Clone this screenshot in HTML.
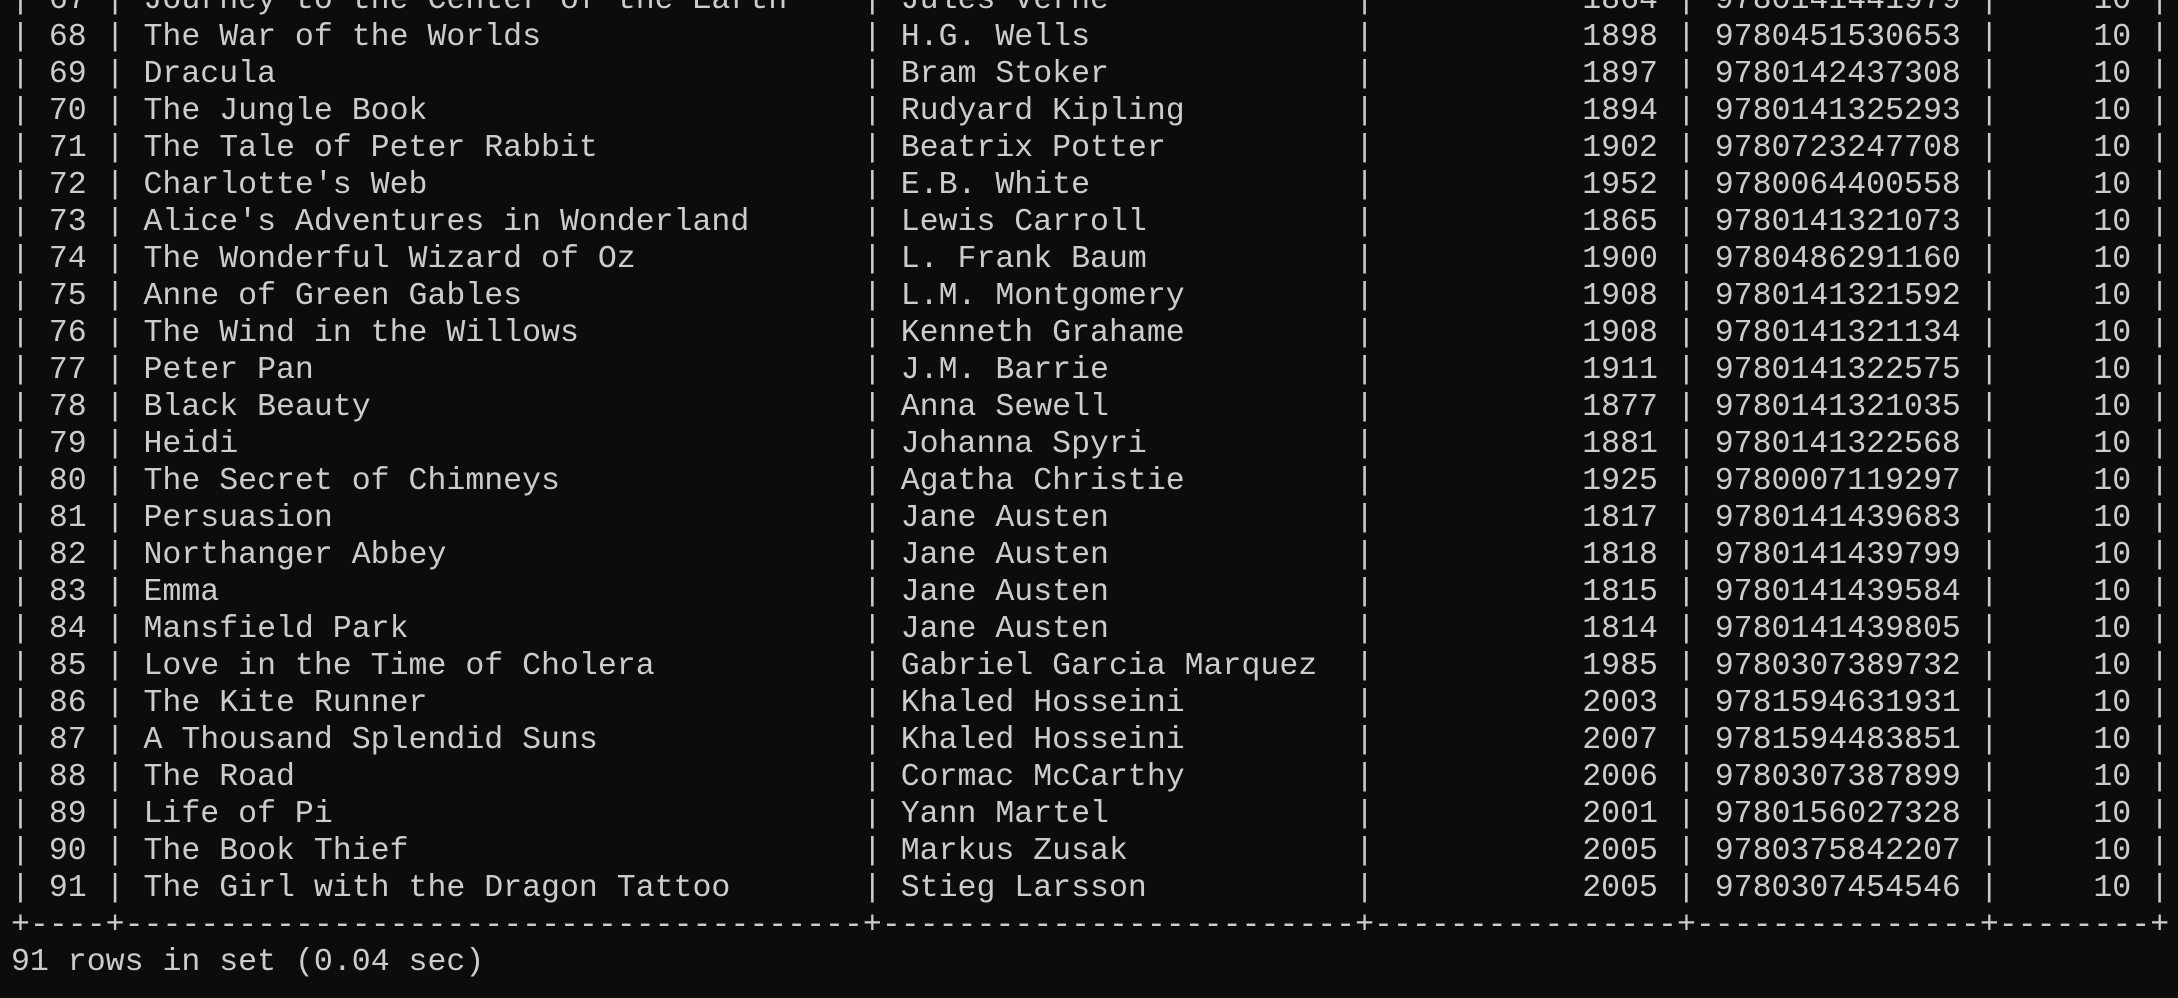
<!DOCTYPE html>
<html><head><meta charset="utf-8"><style>
html,body{margin:0;padding:0;background:#0c0c0c;width:2178px;height:998px;overflow:hidden}
#t{position:absolute;left:11px;top:-18px;font-family:"Liberation Mono",monospace;font-size:31.55px;line-height:37px;color:#cccccc;white-space:normal}
.r{height:37px;white-space:pre}
.r span{display:inline-block;box-sizing:border-box;white-space:pre;overflow:visible;vertical-align:top}
.b{width:1ch}
.a{width:4ch;text-align:right;padding-right:1ch}
.t{width:39ch;padding-left:1ch}
.w{width:25ch;padding-left:1ch}
.y{width:16ch;text-align:right;padding-right:1ch}
.n{width:15ch;padding-left:1ch}
.c{width:8ch;text-align:right;padding-right:1ch}
</style></head><body><div id="t">
<div class="r"><span class="b">|</span><span class="a">67</span><span class="b">|</span><span class="t">Journey to the Center of the Earth</span><span class="b">|</span><span class="w">Jules Verne</span><span class="b">|</span><span class="y">1864</span><span class="b">|</span><span class="n">9780141441979</span><span class="b">|</span><span class="c">10</span><span class="b">|</span></div>
<div class="r"><span class="b">|</span><span class="a">68</span><span class="b">|</span><span class="t">The War of the Worlds</span><span class="b">|</span><span class="w">H.G. Wells</span><span class="b">|</span><span class="y">1898</span><span class="b">|</span><span class="n">9780451530653</span><span class="b">|</span><span class="c">10</span><span class="b">|</span></div>
<div class="r"><span class="b">|</span><span class="a">69</span><span class="b">|</span><span class="t">Dracula</span><span class="b">|</span><span class="w">Bram Stoker</span><span class="b">|</span><span class="y">1897</span><span class="b">|</span><span class="n">9780142437308</span><span class="b">|</span><span class="c">10</span><span class="b">|</span></div>
<div class="r"><span class="b">|</span><span class="a">70</span><span class="b">|</span><span class="t">The Jungle Book</span><span class="b">|</span><span class="w">Rudyard Kipling</span><span class="b">|</span><span class="y">1894</span><span class="b">|</span><span class="n">9780141325293</span><span class="b">|</span><span class="c">10</span><span class="b">|</span></div>
<div class="r"><span class="b">|</span><span class="a">71</span><span class="b">|</span><span class="t">The Tale of Peter Rabbit</span><span class="b">|</span><span class="w">Beatrix Potter</span><span class="b">|</span><span class="y">1902</span><span class="b">|</span><span class="n">9780723247708</span><span class="b">|</span><span class="c">10</span><span class="b">|</span></div>
<div class="r"><span class="b">|</span><span class="a">72</span><span class="b">|</span><span class="t">Charlotte's Web</span><span class="b">|</span><span class="w">E.B. White</span><span class="b">|</span><span class="y">1952</span><span class="b">|</span><span class="n">9780064400558</span><span class="b">|</span><span class="c">10</span><span class="b">|</span></div>
<div class="r"><span class="b">|</span><span class="a">73</span><span class="b">|</span><span class="t">Alice's Adventures in Wonderland</span><span class="b">|</span><span class="w">Lewis Carroll</span><span class="b">|</span><span class="y">1865</span><span class="b">|</span><span class="n">9780141321073</span><span class="b">|</span><span class="c">10</span><span class="b">|</span></div>
<div class="r"><span class="b">|</span><span class="a">74</span><span class="b">|</span><span class="t">The Wonderful Wizard of Oz</span><span class="b">|</span><span class="w">L. Frank Baum</span><span class="b">|</span><span class="y">1900</span><span class="b">|</span><span class="n">9780486291160</span><span class="b">|</span><span class="c">10</span><span class="b">|</span></div>
<div class="r"><span class="b">|</span><span class="a">75</span><span class="b">|</span><span class="t">Anne of Green Gables</span><span class="b">|</span><span class="w">L.M. Montgomery</span><span class="b">|</span><span class="y">1908</span><span class="b">|</span><span class="n">9780141321592</span><span class="b">|</span><span class="c">10</span><span class="b">|</span></div>
<div class="r"><span class="b">|</span><span class="a">76</span><span class="b">|</span><span class="t">The Wind in the Willows</span><span class="b">|</span><span class="w">Kenneth Grahame</span><span class="b">|</span><span class="y">1908</span><span class="b">|</span><span class="n">9780141321134</span><span class="b">|</span><span class="c">10</span><span class="b">|</span></div>
<div class="r"><span class="b">|</span><span class="a">77</span><span class="b">|</span><span class="t">Peter Pan</span><span class="b">|</span><span class="w">J.M. Barrie</span><span class="b">|</span><span class="y">1911</span><span class="b">|</span><span class="n">9780141322575</span><span class="b">|</span><span class="c">10</span><span class="b">|</span></div>
<div class="r"><span class="b">|</span><span class="a">78</span><span class="b">|</span><span class="t">Black Beauty</span><span class="b">|</span><span class="w">Anna Sewell</span><span class="b">|</span><span class="y">1877</span><span class="b">|</span><span class="n">9780141321035</span><span class="b">|</span><span class="c">10</span><span class="b">|</span></div>
<div class="r"><span class="b">|</span><span class="a">79</span><span class="b">|</span><span class="t">Heidi</span><span class="b">|</span><span class="w">Johanna Spyri</span><span class="b">|</span><span class="y">1881</span><span class="b">|</span><span class="n">9780141322568</span><span class="b">|</span><span class="c">10</span><span class="b">|</span></div>
<div class="r"><span class="b">|</span><span class="a">80</span><span class="b">|</span><span class="t">The Secret of Chimneys</span><span class="b">|</span><span class="w">Agatha Christie</span><span class="b">|</span><span class="y">1925</span><span class="b">|</span><span class="n">9780007119297</span><span class="b">|</span><span class="c">10</span><span class="b">|</span></div>
<div class="r"><span class="b">|</span><span class="a">81</span><span class="b">|</span><span class="t">Persuasion</span><span class="b">|</span><span class="w">Jane Austen</span><span class="b">|</span><span class="y">1817</span><span class="b">|</span><span class="n">9780141439683</span><span class="b">|</span><span class="c">10</span><span class="b">|</span></div>
<div class="r"><span class="b">|</span><span class="a">82</span><span class="b">|</span><span class="t">Northanger Abbey</span><span class="b">|</span><span class="w">Jane Austen</span><span class="b">|</span><span class="y">1818</span><span class="b">|</span><span class="n">9780141439799</span><span class="b">|</span><span class="c">10</span><span class="b">|</span></div>
<div class="r"><span class="b">|</span><span class="a">83</span><span class="b">|</span><span class="t">Emma</span><span class="b">|</span><span class="w">Jane Austen</span><span class="b">|</span><span class="y">1815</span><span class="b">|</span><span class="n">9780141439584</span><span class="b">|</span><span class="c">10</span><span class="b">|</span></div>
<div class="r"><span class="b">|</span><span class="a">84</span><span class="b">|</span><span class="t">Mansfield Park</span><span class="b">|</span><span class="w">Jane Austen</span><span class="b">|</span><span class="y">1814</span><span class="b">|</span><span class="n">9780141439805</span><span class="b">|</span><span class="c">10</span><span class="b">|</span></div>
<div class="r"><span class="b">|</span><span class="a">85</span><span class="b">|</span><span class="t">Love in the Time of Cholera</span><span class="b">|</span><span class="w">Gabriel Garcia Marquez</span><span class="b">|</span><span class="y">1985</span><span class="b">|</span><span class="n">9780307389732</span><span class="b">|</span><span class="c">10</span><span class="b">|</span></div>
<div class="r"><span class="b">|</span><span class="a">86</span><span class="b">|</span><span class="t">The Kite Runner</span><span class="b">|</span><span class="w">Khaled Hosseini</span><span class="b">|</span><span class="y">2003</span><span class="b">|</span><span class="n">9781594631931</span><span class="b">|</span><span class="c">10</span><span class="b">|</span></div>
<div class="r"><span class="b">|</span><span class="a">87</span><span class="b">|</span><span class="t">A Thousand Splendid Suns</span><span class="b">|</span><span class="w">Khaled Hosseini</span><span class="b">|</span><span class="y">2007</span><span class="b">|</span><span class="n">9781594483851</span><span class="b">|</span><span class="c">10</span><span class="b">|</span></div>
<div class="r"><span class="b">|</span><span class="a">88</span><span class="b">|</span><span class="t">The Road</span><span class="b">|</span><span class="w">Cormac McCarthy</span><span class="b">|</span><span class="y">2006</span><span class="b">|</span><span class="n">9780307387899</span><span class="b">|</span><span class="c">10</span><span class="b">|</span></div>
<div class="r"><span class="b">|</span><span class="a">89</span><span class="b">|</span><span class="t">Life of Pi</span><span class="b">|</span><span class="w">Yann Martel</span><span class="b">|</span><span class="y">2001</span><span class="b">|</span><span class="n">9780156027328</span><span class="b">|</span><span class="c">10</span><span class="b">|</span></div>
<div class="r"><span class="b">|</span><span class="a">90</span><span class="b">|</span><span class="t">The Book Thief</span><span class="b">|</span><span class="w">Markus Zusak</span><span class="b">|</span><span class="y">2005</span><span class="b">|</span><span class="n">9780375842207</span><span class="b">|</span><span class="c">10</span><span class="b">|</span></div>
<div class="r"><span class="b">|</span><span class="a">91</span><span class="b">|</span><span class="t">The Girl with the Dragon Tattoo</span><span class="b">|</span><span class="w">Stieg Larsson</span><span class="b">|</span><span class="y">2005</span><span class="b">|</span><span class="n">9780307454546</span><span class="b">|</span><span class="c">10</span><span class="b">|</span></div>
<div class="r">+----+---------------------------------------+-------------------------+----------------+---------------+--------+</div>
<div class="r">91 rows in set (0.04 sec)</div>
</div></body></html>
